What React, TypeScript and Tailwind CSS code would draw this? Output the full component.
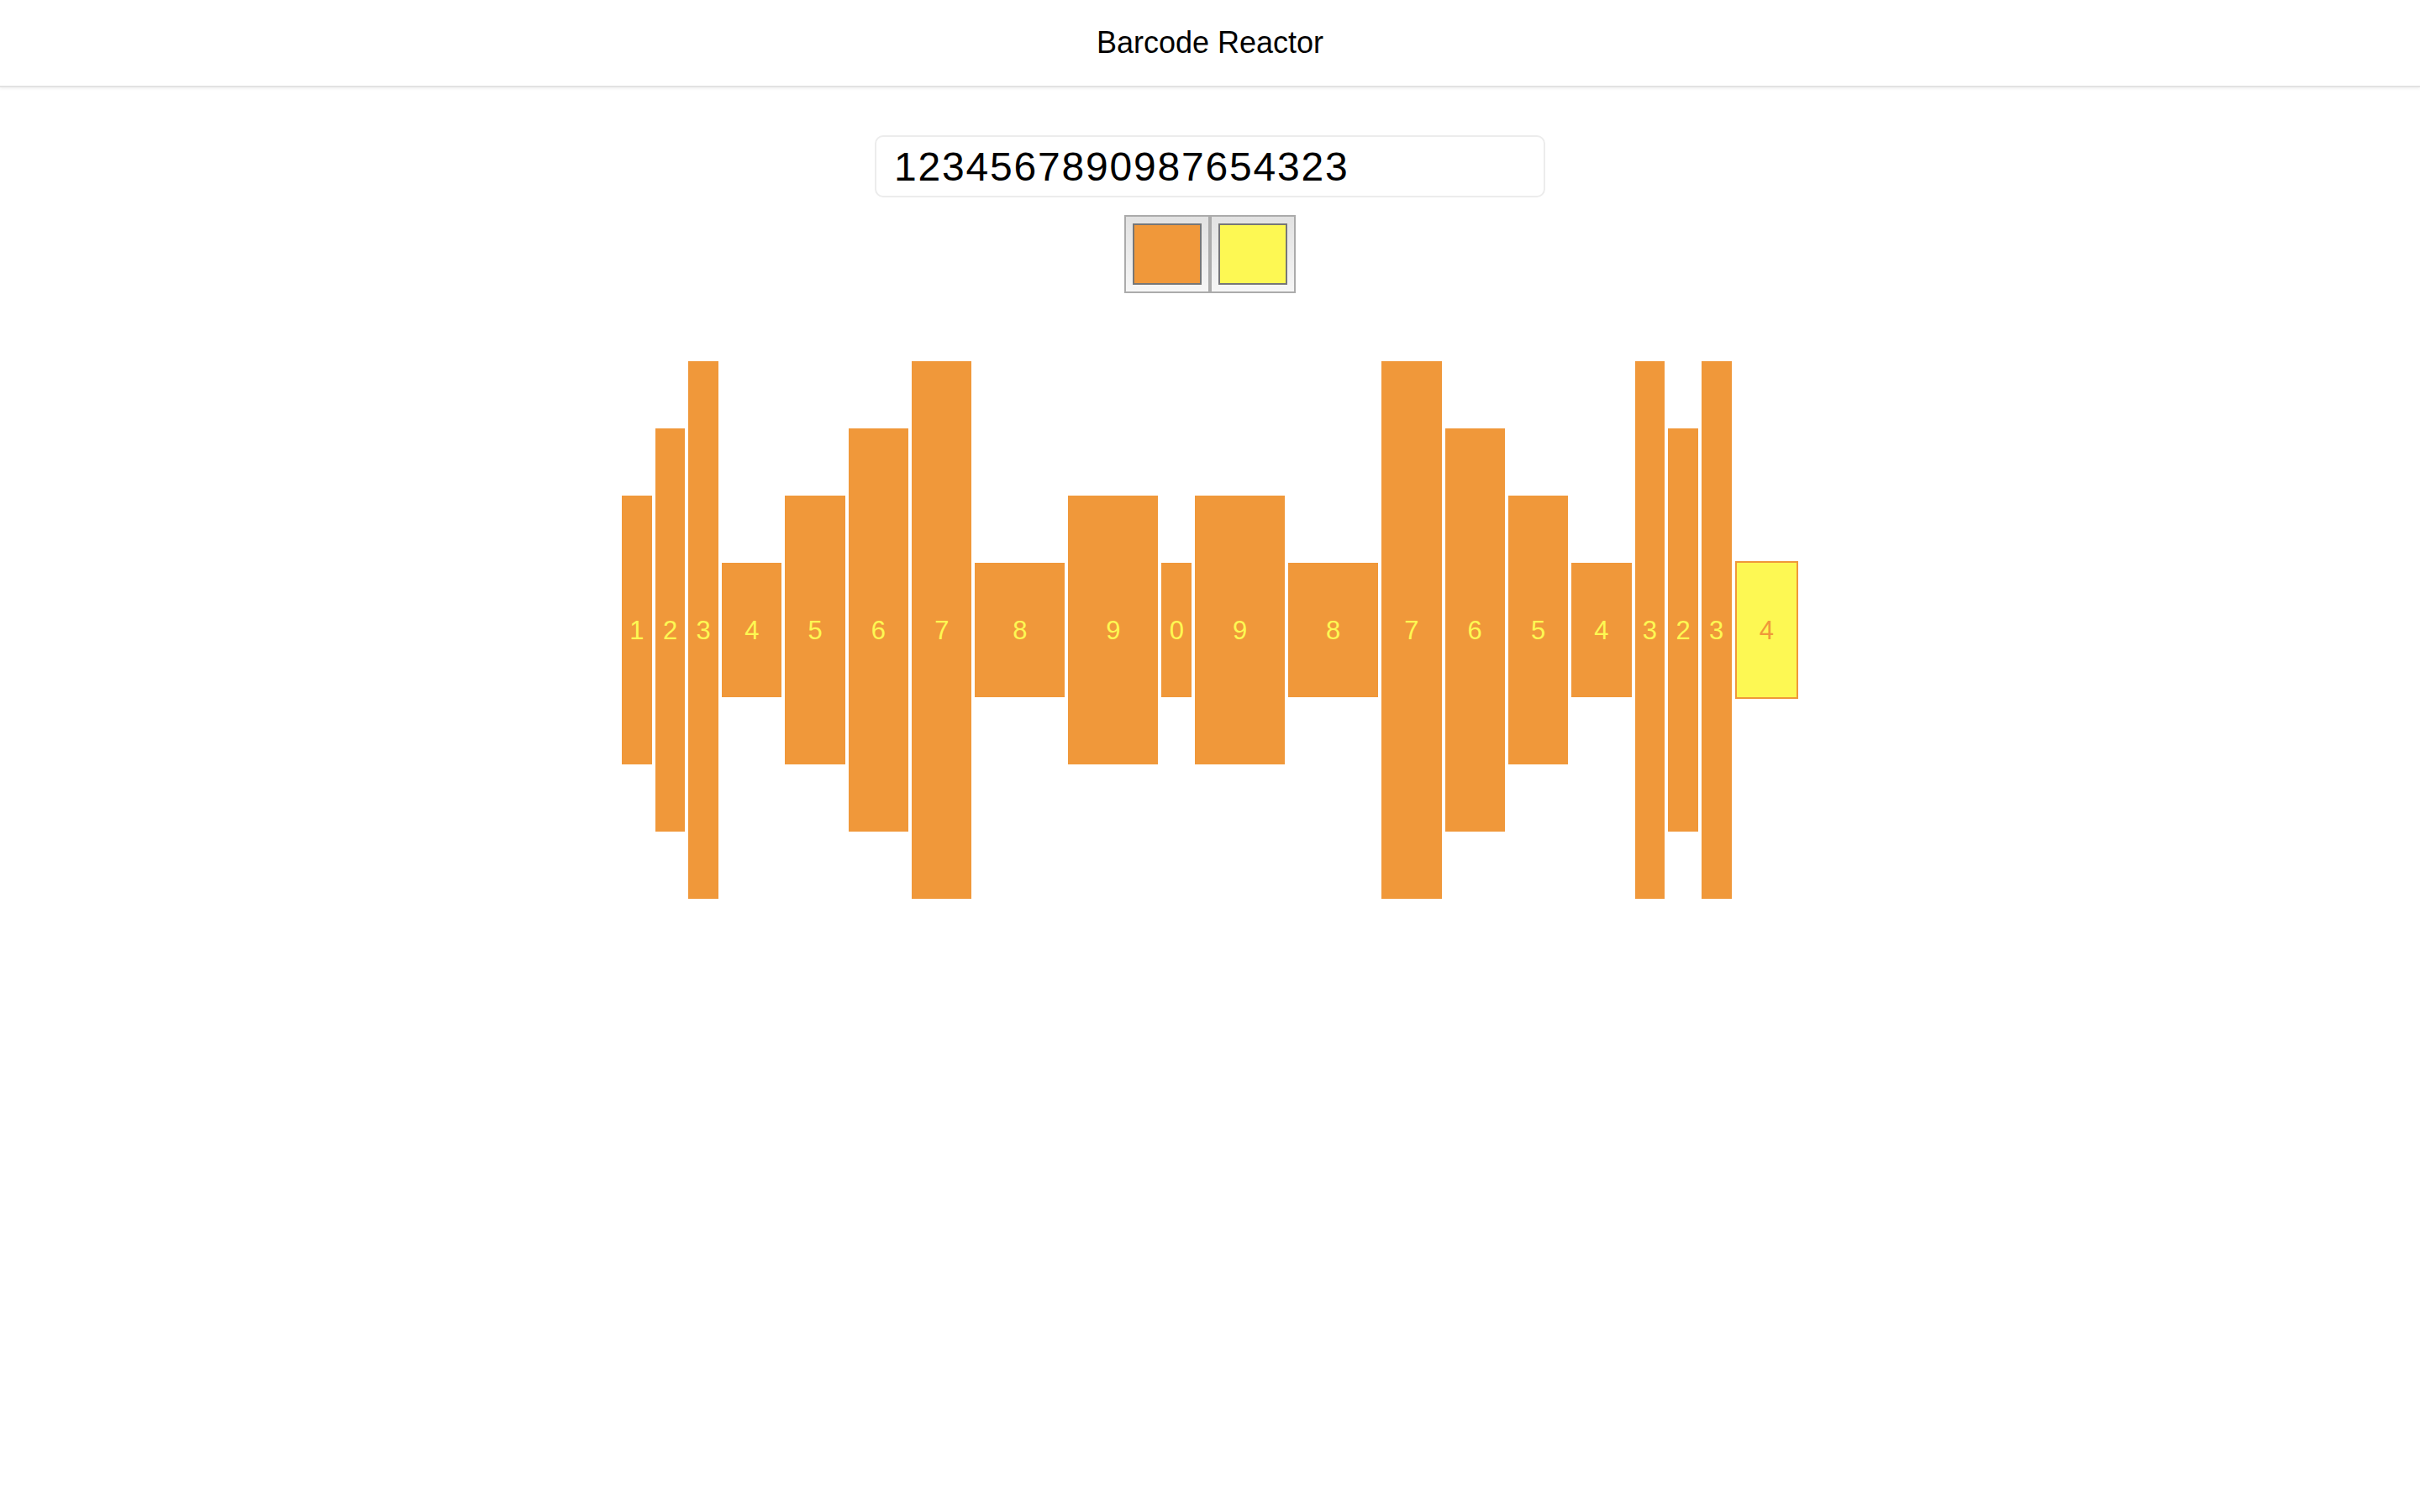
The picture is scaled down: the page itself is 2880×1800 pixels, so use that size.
import { useState } from "react";

const ORANGE = "#f0983a";
const YELLOW = "#fdf853";

// bar geometry, in px
const UNIT_W = 35.676;
const UNIT_H = 160;

const barHeight = (d: number) => (d % 4) + 1;
const barWidth = (d: number) => Math.floor(d / 4) + 1;

function checkDigit(code: string) {
  const sum = code.split("").reduce((acc, c) => acc + Number(c), 0);
  return (sum % 11) % 10;
}

function Bar({ digit, last }: { digit: number; last?: boolean }) {
  const w = barWidth(digit) * UNIT_W + (last ? 4 : 0);
  const h = barHeight(digit) * UNIT_H + (last ? 4 : 0);

  return (
    <div
      className={`flex shrink-0 items-center justify-center text-[31px] leading-none ${
        last
          ? "border-2 border-[#f0983a] bg-[#fdf853] text-[#f0983a]"
          : "bg-[#f0983a] text-[#fdf853]"
      }`}
      style={{ width: w, height: h }}
    >
      {digit}
    </div>
  );
}

function ColorButton({ color }: { color: string }) {
  return (
    <div className="w-[102px] h-[93px] border-2 border-[#ababab] p-[8px] bg-gradient-to-b from-[#e2e2e2] to-[#f6f6f6]">
      <div className="w-full h-full border-2 border-[#777777]" style={{ backgroundColor: color }} />
    </div>
  );
}

export default function App() {
  const [code, setCode] = useState("1234567890987654323");
  const digits = code.replace(/\D/g, "").split("").map(Number);

  return (
    <div className="min-h-screen bg-white font-['Liberation_Sans',Arial,sans-serif] text-black">
      {/* Header */}
      <header className="h-[104px] flex items-center justify-center border-b-2 border-[#e2e2e2] shadow-[0_2px_3px_rgba(0,0,0,0.05)]">
        <h1 className="text-[36px] font-normal">Barcode Reactor</h1>
      </header>

      <main className="flex flex-col items-center">
        <input
          value={code}
          onChange={(e) => setCode(e.target.value)}
          className="mt-[57px] w-[798px] h-[74px] border-2 border-[#ececec] rounded-[10px] px-[21px] text-[48px] tracking-[1.8px] outline-none"
        />

        <div className="mt-[21px] flex">
          <ColorButton color={ORANGE} />
          <ColorButton color={YELLOW} />
        </div>

        {/* Bars */}
        <div className="mt-[81px] h-[640px] flex items-center justify-center gap-[4px]">
          {digits.map((d, idx) => (
            <Bar key={idx} digit={d} />
          ))}
          <Bar digit={checkDigit(code)} last />
        </div>
      </main>
    </div>
  );
}
